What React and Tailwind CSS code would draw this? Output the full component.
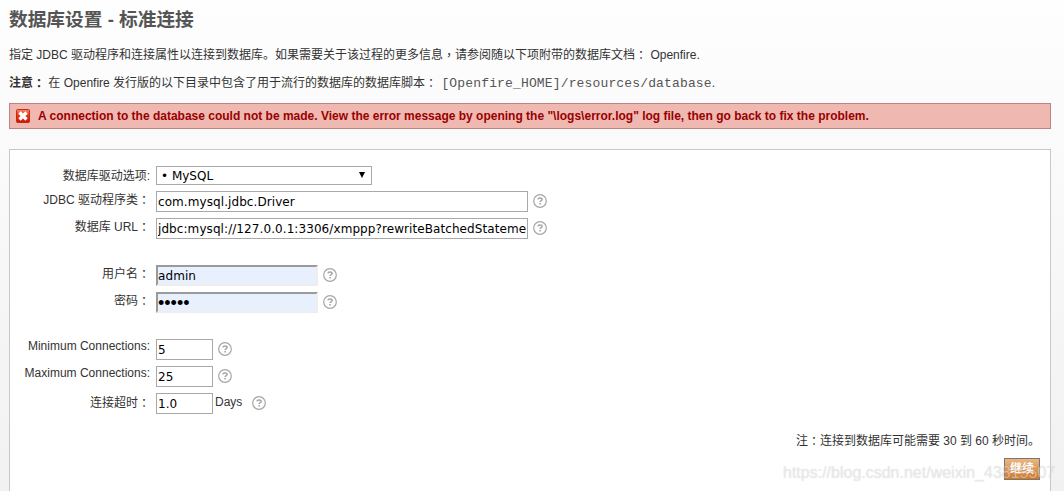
import clsx from 'clsx';

const labelFont = "font-['Liberation_Sans','Noto_Sans_CJK_SC',sans-serif]";

// Full-width punctuation, centred in its cell
const Punct = ({ children }) => (
    <span className="align-[-1px] leading-none font-['Noto_Sans_CJK_TC',sans-serif]">{children}</span>
);

const HelpIcon = ({ className }) => (
    <svg className={clsx('w-[14px] h-[14px] shrink-0', className)} viewBox="0 0 14 14" fill="none" stroke="#a6a6a6">
        <circle cx="7" cy="7" r="6.3" strokeWidth="1.2" />
        <path d="M4.9 5.4C5 4.4 5.9 4 7 4s2.1.5 2.1 1.5C9.1 6.7 7.1 6.6 7.1 8.1" strokeWidth="1.5" />
        <path d="M7.1 9v1.5" strokeWidth="1.6" />
    </svg>
);

const ErrorIcon = () => (
    <svg className="w-[14px] h-[14px] shrink-0" viewBox="0 0 14 14">
        <defs>
            <linearGradient id="err" x1="0" y1="0" x2="0" y2="1">
                <stop offset="0" stopColor="#f08a70" />
                <stop offset="0.45" stopColor="#e23c18" />
                <stop offset="1" stopColor="#cc1400" />
            </linearGradient>
        </defs>
        <rect x="0.5" y="0.5" width="13" height="13" rx="1" fill="url(#err)" stroke="#c62a12" />
        <path d="M3.5 3.5l7 7M10.5 3.5l-7 7" stroke="#fff" strokeWidth="3.4" />
    </svg>
);

function Row({ label, labelTop = 'pt-px', children }) {
    return (
        <div className="flex h-[27px] items-start">
            <label className={clsx('w-[140px] shrink-0 text-right leading-4', labelTop)}>{label}</label>
            <div className="ml-[6px] flex items-start">{children}</div>
        </div>
    );
}

function TextInput({ className, font = "font-['DejaVu_Sans',sans-serif] text-[12px] tracking-[0.08px]", ...props }) {
    return (
        <input
            {...props}
            className={clsx('h-[21px] shrink-0 rounded-none px-px text-black outline-none', font, className)}
        />
    );
}

const plain = 'border border-[#a9a9a9] bg-white';
const filled = 'w-[162px] border-2 border-t-[#9a9a9a] border-l-[#9a9a9a] border-r-[#eeeeee] border-b-[#eeeeee] bg-[#e8f0fe] !px-0';

export default function App() {
    return (
        <div className={clsx('h-[491px] overflow-hidden bg-linear-to-b from-[#fefefe] to-[#f1f1f1] px-[9px] text-[12px] text-[#333]', labelFont)}>
            <div className="flex h-[491px] w-[1042px] flex-col">
                <h1 className="mt-[8px] h-[24px] whitespace-nowrap text-[18.7px] font-bold leading-[24px] text-[#555]">数据库设置 - 标准连接</h1>

                <p className="mt-[15px] h-4 whitespace-nowrap leading-4">
                    指定 JDBC 驱动程序和连接属性以连接到数据库。如果需要关于该过程的更多信息<Punct>，</Punct>请参阅随以下项附带的数据库文档<Punct>：</Punct> Openfire.
                </p>
                <p className="mt-[12px] h-4 whitespace-nowrap leading-4">
                    <b>注意<Punct>：</Punct></b> 在 Openfire 发行版的以下目录中包含了用于流行的数据库的数据库脚本<Punct>：</Punct>{' '}
                    <span className="ml-px font-['Liberation_Mono',monospace] text-[13px] leading-none tracking-[0.15px] text-[#555]">[Openfire_HOME]/resources/database</span>.
                </p>

                <div className="mt-[12px] flex h-[26px] shrink-0 items-center gap-[8px] border border-[#bb8482] bg-[#efb8b1] pl-[6px] font-bold text-[#990000]">
                    <ErrorIcon />
                    <span className="whitespace-nowrap leading-4">
                        A connection to the database could not be made. View the error message by opening the "\logs\error.log" log file, then go back to fix the problem.
                    </span>
                </div>

                <div className="mt-5 h-[342px] shrink-0 border border-b-0 border-[#c8c8c8] bg-white pt-[16px]">
                    <div className="flex h-[25px] items-start">
                        <label className="w-[140px] text-right leading-4 pt-[2px]">数据库驱动选项:</label>
                        <div className="ml-[6px] flex h-[19px] w-[216px] items-center justify-between border border-[#a9a9a9] pl-[4px] pr-[6px] font-['DejaVu_Sans',sans-serif] text-[12px] text-black">
                            <span>• MySQL</span>
                            <svg className="w-[6px] h-[6px] -mt-[2px]" viewBox="0 0 6 6"><path d="M0 0h6L3 6z" /></svg>
                        </div>
                    </div>
                    <Row label={<>JDBC 驱动程序类<Punct>：</Punct></>}>
                        <TextInput className={clsx(plain, 'w-[372px]')} defaultValue="com.mysql.jdbc.Driver" />
                        <HelpIcon className="mt-[3px] ml-[5px]" />
                    </Row>
                    <Row label={<>数据库 URL<Punct>：</Punct></>}>
                        <TextInput className={clsx(plain, 'w-[372px]')} defaultValue="jdbc:mysql://127.0.0.1:3306/xmppp?rewriteBatchedStatements=true" />
                        <HelpIcon className="mt-[3px] ml-[5px]" />
                    </Row>

                    <div className="mt-5">
                        <Row label={<>用户名<Punct>：</Punct></>}>
                            <TextInput className={filled} defaultValue="admin" />
                            <HelpIcon className="mt-[3px] ml-[5px]" />
                        </Row>
                        <Row label={<>密码<Punct>：</Punct></>}>
                            <TextInput
                                type="password"
                                font="font-['Liberation_Sans',sans-serif] text-[18px] pt-[2px]"
                                className={filled}
                                defaultValue="admin"
                            />
                            <HelpIcon className="mt-[3px] ml-[5px]" />
                        </Row>
                    </div>

                    <div className="mt-5">
                        <Row label="Minimum Connections:" labelTop="-mt-px">
                            <TextInput className={clsx(plain, 'w-[57px]')} defaultValue="5" />
                            <HelpIcon className="mt-[3px] ml-[5px]" />
                        </Row>
                        <Row label="Maximum Connections:" labelTop="-mt-px">
                            <TextInput className={clsx(plain, 'w-[57px]')} defaultValue="25" />
                            <HelpIcon className="mt-[3px] ml-[5px]" />
                        </Row>
                        <Row label={<>连接超时<Punct>：</Punct></>} labelTop="pt-[2px]">
                            <TextInput className={clsx(plain, 'w-[57px]')} defaultValue="1.0" />
                            <span className="ml-[2px] w-[30px] leading-4 pt-px">Days</span>
                            <HelpIcon className="mt-[3px] ml-[7px]" />
                        </Row>
                    </div>

                    <p className="mt-[13px] pr-[10px] text-right leading-4">
                        注<Punct>：</Punct>连接到数据库可能需要 30 到 60 秒时间。
                    </p>
                    <div className="mt-[9px] flex justify-end pr-[10px]">
                        <button className="h-[22px] w-[36px] border border-[#777] bg-linear-to-b from-[#e9b680] to-[#d5791c] text-[12px] font-bold leading-5 text-white">
                            继续
                        </button>
                    </div>
                </div>
            </div>

            {/* watermark over the page corner */}
            <div className="absolute left-[783px] top-[463px] whitespace-nowrap text-[16px] leading-5 text-white/50 [text-shadow:0_0_1px_rgba(0,0,0,0.2)] font-['Liberation_Sans',sans-serif]">
                https://blog.csdn.net/weixin_43815507
            </div>
        </div>
    );
}
